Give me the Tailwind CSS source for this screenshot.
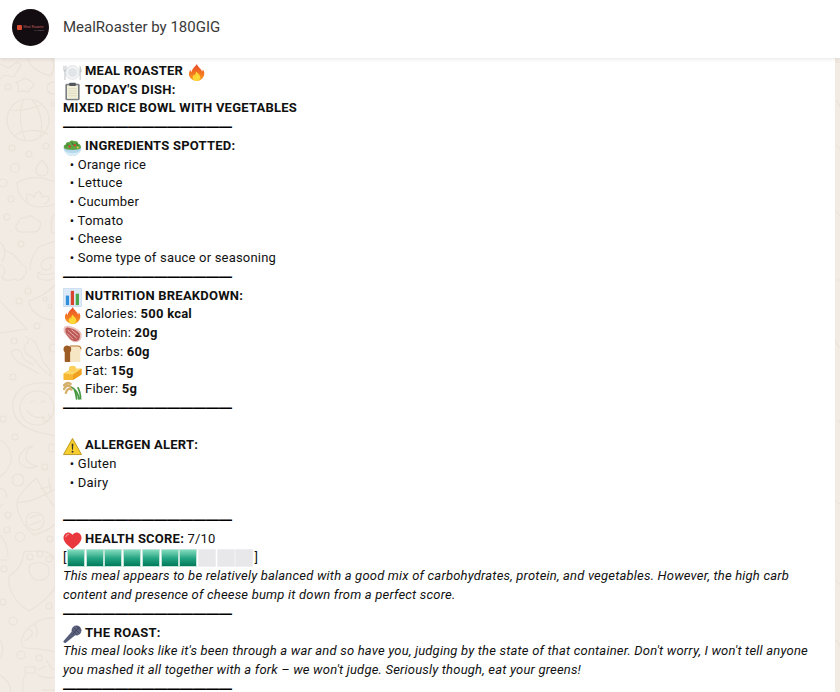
<!DOCTYPE html>
<html lang="en">
<head>
<meta charset="UTF-8">
<title>MealRoaster by 180GIG</title>
<script src="https://cdn.jsdelivr.net/npm/@tailwindcss/browser@4"></script>
</head>
<body class="relative h-[692px] w-[840px] overflow-hidden bg-[#f2ebe4] font-['Roboto',sans-serif]">
  <!-- emoji sprites, drawn once and reused -->
  <svg class="absolute size-0" aria-hidden="true">
    <defs>
      <linearGradient id="flame" x1="0" y1="0" x2="0" y2="1"><stop offset="0" stop-color="#e8482a"/><stop offset="0.6" stop-color="#f47a20"/><stop offset="1" stop-color="#f9a825"/></linearGradient>
      <symbol id="fire" viewBox="0 0 20 20">
        <path d="M10.500 1c.6 3 4 4.300 5.500 8 .5-.7.700-1.600.6-2.500 1.800 2.200 2.200 5 1 7.500-1.300 3-4.200 5-7.600 5s-6.500-2-7.600-5.200c-.8-2.500-.2-4.800 1.300-6.800 0 1.200.4 2.200 1.200 2.800C4.800 6.500 7.800 4.500 10.500 1z" fill="url(#flame)"/>
        <path d="M10.200 9c.3 1.800 3.800 3.300 3.800 6.300 0 2.200-1.800 3.700-4 3.700s-4-1.500-4-3.700c0-1.500.8-2.500 1.800-3.200.2.700.5 1.100 1 1.300-.3-1.600.3-3.200 1.400-4.400z" fill="#fdd835"/>
      </symbol>
    </defs>
  </svg>

  <!-- wallpaper doodles -->
  <svg class="absolute left-0 top-0 h-[692px] w-[840px]" viewBox="0 0 840 692" fill="none" stroke="#e9e2d8" stroke-width="1.100" aria-hidden="true">
    <path d="M0 64l9 4 8-6 4 3-7 12-10-2-4 4"/>
    <path d="M28 59c2 7 9 13 22 17 4-4 5-11 2-18"/>
    <path d="M24 78c4 2 8 2 10 6 0 2-5 6-6 8-3-1-7-1-10 0 1-4 0-8-2-10 3 0 6-2 8-4z"/>
    <circle cx="8" cy="87" r="3"/><circle cx="53" cy="88" r="6"/><circle cx="53" cy="104" r="2"/>
    <circle cx="28" cy="120" r="21"/><path d="M10 110c10 2 28-3 33-6M14 136c8-6 24-8 34-2M24 99c-6 12-4 30 2 42M32 100c8 8 12 26 8 36"/>
    <circle cx="12" cy="148" r="3"/><circle cx="29" cy="154" r="3"/><circle cx="46" cy="146" r="3"/><circle cx="15" cy="168" r="4.500"/><circle cx="3" cy="183" r="4"/><circle cx="11" cy="199" r="3"/><circle cx="7" cy="217" r="3"/><circle cx="21" cy="244" r="3"/>
    <path d="M42 160c3 3 6 6 6 10s-3 6-6 6-6-2-6-6 3-7 6-10z"/><path d="M17 183c7-5 16-6 25-5 5 1 9 3 13 3M17 183c0 12 8 22 20 24 7 0 14-1 18-3M28 202c-2-3-2-6-1-8 3 0 5 1 7 3 1-3 3-5 5-6 2 2 3 4 3 6 2-1 5-1 7 0 0 3-2 6-5 7"/>
    <path d="M20 232c-4-1-6-6-2-9 0-4 4-6 7-5 2-3 8-3 10 1 4 0 7 4 5 8-1 4-4 5-7 5z"/><path d="M55 214c-4 2-5 14-3 19h3"/>
    <path d="M0 242c6 5 6 14 2 20"/><path d="M55 241c-6 3-12 3-17 7-4 5-8 11-8 22M55 258c-5-2-11 1-13 4-2 4 0 8 4 8 4 0 6-3 4-6"/>
    <path d="M3 250c6 1 14 6 20 16"/><path d="M0 265c6 2 6 8 2 12 2 4 8 4 12 2 4 2 8 2 10-3 3-2 3-6 1-10"/>
    <circle cx="28" cy="291" r="3"/><circle cx="19" cy="301" r="3"/><path d="M0 301l27 28-27 4"/>
    <path d="M28 301c9-2 18-7 27-16M28 301c3 10 12 19 27 19"/><circle cx="50" cy="306" r="2"/><circle cx="45" cy="299" r="2"/>
    <path d="M38 272c4 4 12 3 17 1M38 272v6c5 3 12 3 17 0"/>
    <circle cx="37" cy="326" r="3"/><circle cx="14" cy="341" r="3"/><circle cx="53" cy="348" r="4"/><circle cx="13" cy="377" r="3"/><circle cx="3" cy="419" r="3"/><circle cx="15" cy="437" r="3"/><circle cx="52" cy="448" r="4"/><circle cx="45" cy="467" r="3"/><circle cx="18" cy="480" r="6"/>
    <path d="M25 336c3 1 4 4 3 7-4 1-5 6-3 9 3 4 9 5 12 11 3 4 8 9 14 13 0-5-3-9-7-13-3-5-3-11-7-16 0-5-5-8-8-8M11 352c3-3 7-3 9-1 3 2 2 5 3 7 2 3 7 4 10 7M11 352c2 4 4 9 8 11 6 3 14 7 20 11"/>
    <path d="M55 384c-20-4-37 2-41 14-4 14 3 27 18 32 8 3 16 4 23 6"/><circle cx="37" cy="408" r="17"/><path d="M30 403c1-3 4-3 5 0M41 403c1-3 4-3 5 0M27 410c3 6 10 9 18 7"/><path d="M42 416l2 5c3 1 5-1 6-3l-2-5"/>
    <path d="M33 446c-9 1-15 9-14 15 2 6 11 9 18 5-6-1-11-4-11-9 0-5 2-9 7-11z"/>
    <path d="M0 440c6 3 10 9 11 16 1 9-3 15-11 21"/><path d="M3 504l-3 3M0 488c5 1 8 5 6 10"/>
    <path d="M17 502c2-8 14-20 20-24M17 502c-1 10 7 26 17 33 7-2 15-5 21-11M36 478c6 9 13 23 19 29M17 502c10 2 28-7 38-13"/>
    <circle cx="35" cy="521" r="9"/><path d="M29 518l11-4M30 525l11-4M40 489l12-3M48 478l3 14"/>
    <circle cx="8" cy="515" r="3"/><circle cx="7" cy="530" r="3"/><circle cx="20" cy="537" r="4.500"/><circle cx="50" cy="539" r="3"/><circle cx="4" cy="569" r="3"/><circle cx="3" cy="602" r="3"/><circle cx="49" cy="606" r="3"/><circle cx="13" cy="621" r="4"/><circle cx="21" cy="655" r="4"/><circle cx="39" cy="658" r="3"/>
    <path d="M0 535c6 6 8 14 8 22M0 560h7"/>
    <path d="M24 552c-1 10-5 18-15 24-2 13 6 26 20 35 11-7 21-14 26-24V560c-3-6-9-9-15-9-6 0-12 0-16 1z"/>
    <circle cx="30" cy="557" r="3"/><circle cx="40" cy="554" r="3"/><circle cx="49" cy="559" r="3"/><path d="M30 565c4-3 13-3 17 0 3 4 3 9-1 13-4 3-10 3-13 0-4-4-5-9-3-13z"/>
    <path d="M55 618c-12-1-28 6-33 20-2 6 0 9 4 10 10 1 20 1 29 4M28 629c3 0 5 3 4 6-2 2-4 4-7 6M34 624c4 4 4 10 2 13"/>
    <path d="M0 640c4 6 4 14-2 20"/>
    <path d="M25 667h10v6H25zM38 670l8-4M26 674c-3 4-4 9-3 18M37 674c6 4 11 5 18 3M46 660l6 9 3 0M55 690H42"/>
    <path d="M0 675c5 3 10 8 11 17"/>
    <path d="M835 62h5M836 100c2 2 3 4 4 7M836 146a4 4 0 0 1 4 4M835 210l5 6M837 280h3M835 340c2 4 3 6 5 8M837 420a3 3 0 0 1 3 3M835 500c2 3 4 4 5 4M836 580l4 5M835 640c3 1 4 3 5 6"/>
  </svg>

  <header class="relative z-10 flex h-[58px] items-center bg-white pb-[3px] pl-3 shadow-[0_1px_4px_rgba(0,0,0,0.1)]">
    <div class="flex size-[37px] items-center justify-center rounded-full bg-[#130c10]">
      <div class="flex items-center gap-[1px]">
        <div class="size-[5px] rounded-[1px] bg-[#d9482f]"></div>
        <div class="flex flex-col items-end">
          <span class="text-[3.5px] leading-[4px] whitespace-nowrap text-[#b8595c]">Meal Roaster</span>
          <span class="text-[2px] leading-[2px] whitespace-nowrap text-[#8a7d80]">by 180GIG</span>
        </div>
      </div>
    </div>
    <h1 class="ml-[14px] text-[15px] font-normal text-[#3a3a3a]">MealRoaster by 180GIG</h1>
  </header>

  <main class="relative ml-[55px] h-[634px] w-[780px] overflow-hidden bg-white pl-2 pr-2 pt-1 text-[13px] leading-[18.72px] tracking-[0.195px] text-[#111]">
    <p><svg class="-my-1 mr-[3px] inline-block size-[19px] align-[-3px]" viewBox="0 0 20 20">
        <path d="M.5 3v4.500c0 1 .5 1.400 1 1.600V18h1.200V9.100c.5-.2 1-.6 1-1.600V3h-.6v4h-.5V3h-.9v4h-.5V3z" fill="#c3c7ca"/>
        <circle cx="10" cy="10" r="7.200" fill="#f4f5f6" stroke="#c9cdd0" stroke-width=".6"/><circle cx="10" cy="10" r="4.800" fill="#e2e5e8"/>
        <path d="M17.500 2.500c1.200.6 2 3 2 6 0 1-.4 1.600-.9 1.700V18h-1.100z" fill="#c3c7ca"/></svg><strong class="font-bold tracking-[0.23px]">MEAL ROASTER </strong><svg class="-my-1 inline-block size-[19px] align-[-3px]"><use href="#fire"/></svg></p>
    <p><svg class="-my-1 mr-[3px] inline-block size-[19px] align-[-3px]" viewBox="0 0 20 20">
        <rect x="2.500" y="1.800" width="15" height="17.500" rx="1.500" fill="#7b7f83"/>
        <rect x="4.200" y="3.500" width="11.600" height="14.200" fill="#f1efd8"/>
        <path d="M5.500 7h9M5.500 9.500h9M5.500 12h9M5.500 14.500h9" stroke="#cfccb0" stroke-width=".6"/>
        <rect x="6.500" y=".8" width="7" height="3.400" rx=".8" fill="#54585c"/></svg><strong class="font-bold tracking-[0.23px]">TODAY'S DISH:</strong></p>
    <p class="font-bold tracking-[0.23px]">MIXED RICE BOWL WITH VEGETABLES</p>
    <p class="font-['Noto_Sans_CJK_SC',sans-serif] font-bold tracking-normal text-black">━━━━━━━━━━━━━</p>

    <p><svg class="-my-1 mr-[3px] inline-block size-[19px] align-[-3px]" viewBox="0 0 20 20">
        <path d="M.5 10c.6 5.500 4.500 9 9.500 9s8.900-3.500 9.500-9z" fill="#b5d8ec"/>
        <path d="M10 16c-3.500 0-6.500-1-8.800-3 1.500 3.800 4.800 6 8.800 6s7.300-2.200 8.800-6C16.500 15 13.500 16 10 16z" fill="#dbeef8"/>
        <path d="M1 10.500C.2 8.500 1.500 7 3 6.800c-.2-2 1.800-3.200 3.500-2.400C7.500 2.500 10.500 2 12 3.500c1.800-.8 4 .4 4 2.500 2 0 3.300 2.500 2.800 4.500-1.500 1.500-4.500 2-8.800 2-4.500 0-7.500-.5-9-2z" fill="#5da544"/>
        <path d="M3 9l3-3M9 4.500l2 3M14 5.500l2 3" stroke="#2f6f28" stroke-width="1"/>
        <circle cx="7" cy="9" r="1.300" fill="#d6402f"/><circle cx="12.500" cy="7.500" r="1.300" fill="#d6402f"/><circle cx="15.500" cy="10" r="1" fill="#e9c64a"/></svg><strong class="font-bold tracking-[0.23px]">INGREDIENTS SPOTTED:</strong></p>
    <p class="whitespace-pre">  • Orange rice</p>
    <p class="whitespace-pre">  • Lettuce</p>
    <p class="whitespace-pre">  • Cucumber</p>
    <p class="whitespace-pre">  • Tomato</p>
    <p class="whitespace-pre">  • Cheese</p>
    <p class="whitespace-pre">  • Some type of sauce or seasoning</p>
    <p class="font-['Noto_Sans_CJK_SC',sans-serif] font-bold tracking-normal text-black">━━━━━━━━━━━━━</p>

    <p><svg class="-my-1 mr-[3px] inline-block size-[19px] align-[-3px]" viewBox="0 0 20 20">
        <rect x=".5" y=".5" width="19" height="19" fill="#dbe9f8" stroke="#b9d2ec" stroke-width=".6"/>
        <rect x="3" y="8" width="3.400" height="10" fill="#2f8fd8"/>
        <rect x="8.200" y="3" width="3.400" height="15" fill="#d9442f"/>
        <rect x="13.400" y="6" width="3.400" height="12" fill="#4aa64a"/></svg><strong class="font-bold tracking-[0.23px]">NUTRITION BREAKDOWN:</strong></p>
    <p><svg class="-my-1 mr-[3px] inline-block size-[19px] align-[-3px]"><use href="#fire"/></svg>Calories: <strong class="font-bold tracking-[0.23px]">500 kcal</strong></p>
    <p><svg class="-my-1 mr-[3px] inline-block size-[19px] align-[-3px]" viewBox="0 0 20 20">
        <path d="M.5 4.500C.5 1.500 3.500.5 6 1c4.500.8 10 2.800 12.800 6.500 1.300 2 1 5.500 0 7.500-1.500 3-5 3.800-8 2.800-4-1.500-5.300-5-7.300-7C1.500 9 .5 7 .5 4.500z" fill="#eac2bb"/>
        <path d="M2.500 4.800c0-1.800 2-2.300 3.500-2 3.800.7 8.500 2.600 11 5.700 1.200 1.700 1 4.500.1 6.200-1.200 2.200-4 2.800-6.500 2-3.300-1.200-4.400-4-6.200-5.700C3.200 9.500 2.500 7.300 2.500 4.800z" fill="#bd5a58"/>
        <path d="M5 5.500l9.500 8.500M9 5l7 6M4.500 9l6 6" stroke="#ecc0b8" stroke-width=".9"/></svg>Protein: <strong class="font-bold tracking-[0.23px]">20g</strong></p>
    <p><svg class="-my-1 mr-[3px] inline-block size-[19px] align-[-3px]" viewBox="0 0 20 20">
        <path d="M4.500 1.500C2 1.500.5 3.300.5 5.500c0 1.500.7 2.500 1.300 3V18c0 .8.500 1 1 1H9V3z" fill="#9c5c25"/>
        <path d="M7 1.500h8.500c2.500 0 4 1.800 4 4 0 1.500-.7 2.500-1.300 3V18c0 .8-.4 1-1 1H7.500V8.500c.7-.5 1.300-1.500 1.300-3 0-1.800-.7-3.200-1.800-4z" fill="#f6e6c4"/>
        <path d="M7 1.500h8.500c2.500 0 4 1.800 4 4h-1c0-1.800-1.300-3-3.200-3H8.200z" fill="#b87a38"/></svg>Carbs: <strong class="font-bold tracking-[0.23px]">60g</strong></p>
    <p><svg class="-my-1 mr-[3px] inline-block size-[19px] align-[-3px]" viewBox="0 0 20 20">
        <path d="M.5 11l9-5h10v6l-9 6H.5z" fill="#f7b733"/>
        <path d="M.5 11l9-5h10l-9 6z" fill="#fcd76b"/>
        <path d="M10.500 12l9-6v6l-9 6z" fill="#f0a020"/>
        <ellipse cx="10" cy="6" rx="3.800" ry="3" fill="#fbcf5a"/></svg>Fat: <strong class="font-bold tracking-[0.23px]">15g</strong></p>
    <p><svg class="-my-1 mr-[3px] inline-block size-[19px] align-[-3px]" viewBox="0 0 20 20" fill="none">
        <path d="M17 19.500C16 13 13 8 8 6M14.500 19.500c-.5-4-1-7-2.500-10.500M18.500 19.500c0-4-.5-9-3-13" stroke="#4a9a45" stroke-width="1.800"/>
        <path d="M8 6C5 4 3 5 1 8.500M9 9C6 7 4 9 3 12.500M8 3C5.500 1.500 3 2 1 4.500" stroke="#d4b06a" stroke-width="2.400" stroke-linecap="round"/></svg>Fiber: <strong class="font-bold tracking-[0.23px]">5g</strong></p>
    <p class="font-['Noto_Sans_CJK_SC',sans-serif] font-bold tracking-normal text-black">━━━━━━━━━━━━━</p>
    <p>&nbsp;</p>

    <p><svg class="-my-1 mr-[3px] inline-block size-[19px] align-[-3px]" viewBox="0 0 20 20">
        <path d="M10 1.500L.5 18.500h19z" fill="#f6ce2f" stroke="#b58e12" stroke-width=".9" stroke-linejoin="round"/>
        <path d="M9.100 7h1.800l-.4 6.500h-1z" fill="#333"/><circle cx="10" cy="15.500" r="1" fill="#333"/></svg><strong class="font-bold tracking-[0.23px]">ALLERGEN ALERT:</strong></p>
    <p class="whitespace-pre">  • Gluten</p>
    <p class="whitespace-pre">  • Dairy</p>
    <p>&nbsp;</p>
    <p class="font-['Noto_Sans_CJK_SC',sans-serif] font-bold tracking-normal text-black">━━━━━━━━━━━━━</p>

    <p><svg class="-my-1 mr-[3px] inline-block size-[19px] align-[-3px]" viewBox="0 0 20 20">
        <path d="M10 19C5 15 .5 11.500.5 7 .5 3.800 3 1.500 5.700 1.500 7.500 1.500 9 2.500 10 4c1-1.500 2.500-2.500 4.300-2.500C17 1.500 19.500 3.800 19.500 7c0 4.500-4.500 8-9.500 12z" fill="#e8383d"/>
        <path d="M3 6c.5-1.500 1.500-2.300 3-2.500" stroke="#f58a8a" stroke-width="1.200" fill="none" stroke-linecap="round"/></svg><strong class="font-bold tracking-[0.23px]">HEALTH SCORE:</strong> 7/10</p>
    <div class="flex h-[18.72px] items-center">
      <span class="w-1">[</span>
      <div class="flex gap-[0.72px]">
        <div class="h-[18px] w-[18px] border border-[#bfe3d7] bg-linear-to-b from-[#7edcbd] via-[#24a684] to-[#007a5a]"></div>
        <div class="h-[18px] w-[18px] border border-[#bfe3d7] bg-linear-to-b from-[#7edcbd] via-[#24a684] to-[#007a5a]"></div>
        <div class="h-[18px] w-[18px] border border-[#bfe3d7] bg-linear-to-b from-[#7edcbd] via-[#24a684] to-[#007a5a]"></div>
        <div class="h-[18px] w-[18px] border border-[#bfe3d7] bg-linear-to-b from-[#7edcbd] via-[#24a684] to-[#007a5a]"></div>
        <div class="h-[18px] w-[18px] border border-[#bfe3d7] bg-linear-to-b from-[#7edcbd] via-[#24a684] to-[#007a5a]"></div>
        <div class="h-[18px] w-[18px] border border-[#bfe3d7] bg-linear-to-b from-[#7edcbd] via-[#24a684] to-[#007a5a]"></div>
        <div class="h-[18px] w-[18px] border border-[#bfe3d7] bg-linear-to-b from-[#7edcbd] via-[#24a684] to-[#007a5a]"></div>
        <div class="h-[18px] w-[18px] rounded-[1px] border border-[#eeeef0] bg-[#e8e8ea]"></div>
        <div class="h-[18px] w-[18px] rounded-[1px] border border-[#eeeef0] bg-[#e8e8ea]"></div>
        <div class="h-[18px] w-[18px] rounded-[1px] border border-[#eeeef0] bg-[#e8e8ea]"></div>
      </div>
      <span class="ml-[1px]">]</span>
    </div>
    <p class="italic">This meal appears to be relatively balanced with a good mix of carbohydrates, protein, and vegetables. However, the high carb content and presence of cheese bump it down from a perfect score.</p>
    <p class="font-['Noto_Sans_CJK_SC',sans-serif] font-bold tracking-normal text-black">━━━━━━━━━━━━━</p>

    <p><svg class="-my-1 mr-[3px] inline-block size-[19px] align-[-3px]" viewBox="0 0 20 20">
        <path d="M10.500 5.500L.8 16.500c-.5.7-.4 1.400.2 2 .6.500 1.300.6 2 .1L14.500 9.500z" fill="#565b78"/>
        <circle cx="14.200" cy="5.800" r="5.200" fill="#5f6480"/>
        <path d="M11 2.500l6.500 6.500M14 1l5 5M9.500 5l5.500 5.500M17.500 2L10 10" stroke="#383b52" stroke-width=".8"/></svg><strong class="font-bold tracking-[0.23px]">THE ROAST:</strong></p>
    <p class="italic">This meal looks like it's been through a war and so have you, judging by the state of that container. Don't worry, I won't tell anyone you mashed it all together with a fork – we won't judge. Seriously though, eat your greens!</p>
    <p class="font-['Noto_Sans_CJK_SC',sans-serif] font-bold tracking-normal text-black">━━━━━━━━━━━━━</p>
  </main>
</body>
</html>
